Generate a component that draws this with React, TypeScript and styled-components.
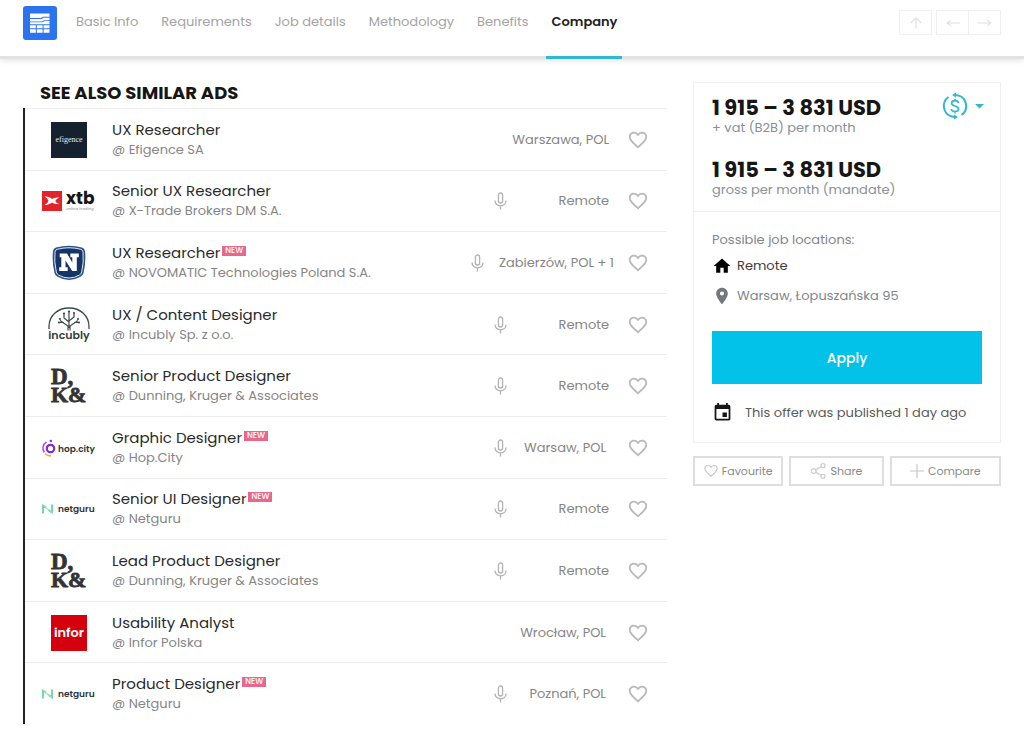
import React from "react";
import styled, { createGlobalStyle } from "styled-components";

const Global = createGlobalStyle`
  * { box-sizing: border-box; }
  body {
    margin: 0;
    background: #fff;
    color: #222;
    font-family: Poppins, Inter, "Noto Sans", sans-serif;
    font-size: 13px;
    line-height: 20px;
  }
  h2, p, ul { margin: 0; padding: 0; }
  ul { list-style: none; }
  a { color: inherit; text-decoration: none; }
  button { font: inherit; cursor: pointer; padding: 0; background: none; border: 0; }
  svg { display: block; flex: none; overflow: visible; }
`;

const Header = styled.header`
  display: flex;
  align-items: flex-start;
  height: 59px;
  padding: 0 23px;
  border-bottom: 3px solid #e2e2e2;
  box-shadow: 0 2px 5px rgba(0, 0, 0, 0.1);
`;

const BrandLink = styled.a`
  margin: 6px 14px 0 0;
`;

const Tabs = styled.nav`
  display: flex;
  flex: 1;
  gap: 13px;
`;

const Tab = styled.a<{ $active?: boolean }>`
  height: 59px;
  padding: 12px 5px 0;
  color: ${(p) => (p.$active ? "#222" : "#a3a3a3")};
  font-weight: ${(p) => (p.$active ? 600 : 400)};
  border-bottom: 3px solid ${(p) => (p.$active ? "#2fb9d0" : "transparent")};
`;

const Pager = styled.div`
  display: flex;
  margin-top: 10px;
`;

const PagerButton = styled.button<{ $joined?: boolean; $apart?: boolean }>`
  display: grid;
  place-items: center;
  width: 33px;
  height: 25px;
  border: 1px solid #efefef;
  color: #e0e0e0;
  margin-right: ${(p) => (p.$apart ? "4px" : "0")};
  margin-left: ${(p) => (p.$joined ? "-1px" : "0")};
`;

const Page = styled.div`
  display: grid;
  grid-template-columns: minmax(0, 1fr) 308px;
  gap: 26px;
  align-items: start;
  padding: 23px 23px 11px;
`;

const Heading = styled.h2`
  padding: 0 0 4px 17px;
  font-size: 18px;
  line-height: 22px;
  font-weight: 700;
  color: #161616;
`;

const AdList = styled.ul`
  display: grid;
  grid-auto-rows: 1fr;
  min-height: 616px;
  border-left: 2px solid #222;
`;

const AdRow = styled.li`
  display: flex;
  align-items: center;
  padding: 1px 18px 0 16px;
  border-top: 1px solid #ededed;
`;

const LogoCell = styled.div`
  display: grid;
  place-items: center;
  width: 56px;
  margin-right: 15px;
`;

const AdText = styled.div`
  flex: 1;
  min-width: 0;
`;

const AdTitle = styled.a`
  display: flex;
  align-items: center;
  gap: 2px;
  font-size: 15px;
  color: #2a2a2a;
`;

const NewBadge = styled.span`
  padding: 0 3px;
  margin-bottom: 4px;
  background: #e9668c;
  color: #fff;
  font-size: 8px;
  line-height: 10px;
  font-weight: 500;
`;

const Company = styled.p`
  color: #858585;
`;

const Place = styled.span<{ $inset: number }>`
  min-width: 107px;
  padding: 0 ${(p) => p.$inset}px 0 15px;
  text-align: right;
  color: #858585;
`;

const HeartButton = styled.button`
  margin-left: 13px;
  color: #b9b9b9;
`;

const Card = styled.section`
  border: 1px solid #efefef;
`;

const Salaries = styled.div`
  display: flex;
  justify-content: space-between;
  padding: 12px 16px 14px 18px;
  border-bottom: 1px solid #efefef;
`;

const Salary = styled.div`
  & + & { margin-top: 22px; }
`;

const Amount = styled.p`
  font-size: 21px;
  line-height: 26px;
  font-weight: 700;
  color: #161616;
`;

const SalaryNote = styled.p`
  line-height: 14px;
  color: #8a9096;
`;

const CurrencyButton = styled.button`
  display: flex;
  align-items: center;
  gap: 7px;
  height: 22px;
  color: #2fb9d0;
`;

const Details = styled.div`
  padding: 18px;
`;

const Muted = styled.p`
  color: #80868c;
`;

const LocationRow = styled.p<{ $strong?: boolean }>`
  display: flex;
  align-items: center;
  gap: 5px;
  height: 20px;
  margin-top: ${(p) => (p.$strong ? "6px" : "10px")};
  color: ${(p) => (p.$strong ? "#3c3c3c" : "#80868c")};
`;

const ApplyButton = styled.button`
  width: 100%;
  height: 53px;
  margin-top: 25px;
  background: #03c2ea;
  color: #fff;
  font-size: 14px;
  font-weight: 500;
`;

const Published = styled.p`
  display: flex;
  align-items: center;
  gap: 12px;
  margin: 18px 0 1px;
  color: #5a5a5a;
`;

const Actions = styled.div`
  display: grid;
  grid-template-columns: 90fr 94fr 111fr;
  gap: 6px;
  margin-top: 13px;
`;

const ActionButton = styled.button`
  display: flex;
  align-items: center;
  justify-content: center;
  gap: 4px;
  height: 30px;
  border: 2px solid #dedede;
  color: #8a8a8a;
  font-size: 11px;
`;

const Icon = ({ children, size = 24, stroke = 2 }: { children: React.ReactNode; size?: number; stroke?: number }) => (
  <svg width={size} height={size} viewBox="0 0 24 24" fill="none" stroke="currentColor" strokeWidth={stroke} aria-hidden="true">
    {children}
  </svg>
);

const Heart = ({ size = 22 }: { size?: number }) => (
  <svg width={size} height={size} viewBox="0 0 24 24" fill="currentColor" aria-hidden="true">
    <path d="M16.5 3c-1.74 0-3.41.81-4.5 2.09C10.91 3.81 9.24 3 7.5 3 4.42 3 2 5.42 2 8.5c0 3.78 3.4 6.86 8.55 11.54L12 21.35l1.45-1.32C18.6 15.36 22 12.28 22 8.5 22 5.42 19.58 3 16.5 3zm-4.4 15.55l-.1.1-.1-.1C7.14 14.24 4 11.39 4 8.5 4 6.5 5.5 5 7.5 5c1.54 0 3.04.99 3.57 2.36h1.87C13.46 5.99 14.96 5 16.5 5c2 0 3.5 1.5 3.5 3.5 0 2.89-3.14 5.74-7.9 10.05z" />
  </svg>
);

const Mic = () => (
  <svg width="13" height="18" viewBox="0 0 13 18" fill="none" stroke="#b3b3b3" strokeWidth="1.3" aria-label="Remote recruitment" role="img">
    <rect x="4.4" y="1" width="4.2" height="10" rx="2.1" />
    <path d="M1 8.5c0 3 2.2 5.3 5.5 5.3S12 11.5 12 8.5M6.5 13.8V17.5" />
  </svg>
);

const BrandMark = () => (
  <svg width="34" height="34" viewBox="0 0 34 34" role="img" aria-label="Home">
    <rect width="34" height="34" rx="3" fill="#2c74ef" />
    <path fill="#fff" d="M7 7.500h19.500v3.300h-6.500l-2 1.200H7zM7 12.900h11.500l2-1.200h6v2.600h-5.500l-2.200 1.200H7zM7 16.300h12.500l2.200-1.200h4.800v3.200H7zM7 19.200h5.800v3.100H7zM13.800 19.200h5.800v3.100h-5.800zM20.600 19.200h5.900v3.100h-5.900zM7 23.200h5.800v3.500H7zM13.800 23.200h5.800v3.500h-5.800zM20.600 23.200h5.900v3.500h-5.900z" />
  </svg>
);

const Efigence = () => (
  <svg width="36" height="36" viewBox="0 0 36 36">
    <rect width="36" height="36" fill="#162130" />
    <text x="18" y="20" fill="#e8eaec" fontFamily="Liberation Serif, serif" fontSize="8" textAnchor="middle">efigence</text>
  </svg>
);

const Xtb = () => (
  <svg width="54" height="22" viewBox="0 0 54 22">
    <rect y="1" width="20" height="20" fill="#e1242a" />
    <path d="M2.500 6.500c3.500-.3 5.800 1 7.700 2.500 2-1.200 4.400-1.700 7.300-1.500-2 .9-3.500 2-4.200 3.500.8 1.500 2.300 2.500 4.300 3-3 .4-5.600-.2-7.500-1.500-2.200 1.500-4.600 2.600-7.600 2.600 1.900-1.100 3.300-2.400 4-4.100-.5-1.700-1.900-3.300-4-4.500z" fill="#fff" />
    <text x="24" y="14" fill="#161616" fontFamily="Poppins, sans-serif" fontSize="17" fontWeight="700">xtb</text>
    <text x="24" y="20" fill="#8a8a8a" fontFamily="Poppins, sans-serif" fontSize="4">online trading</text>
  </svg>
);

const Novomatic = () => (
  <svg width="34" height="36" viewBox="0 0 34 36">
    <path d="M4 2.500Q17-1 30 2.500q2.500.7 3 3.500 1.200 11-1.500 22-.7 2.600-3 3.800-5.500 3.200-11.500 3.200T5.500 31.800q-2.300-1.200-3-3.800Q-.2 17 1 6q.5-2.800 3-3.500z" fill="#2d5288" />
    <path d="M5.200 4.300Q17 1.200 28.800 4.300q1.900.5 2.200 2.600 1 10.200-1.300 20-.5 2.200-2.300 3.200Q22.500 33 17 33T6.600 30.100q-1.800-1-2.300-3.200Q2 17 3 6.900q.3-2.100 2.200-2.600z" fill="#153566" stroke="#dfe6ef" strokeWidth="1" />
    <path d="M7.700 8.500h7.300l5.300 9v-5.300h-2V8.500h8.500v3.700h-2V26h-4.600l-6.700-10.500v6.800h2.200V26H7.200v-3.700h2.100V12.200H7.700z" fill="#fff" />
  </svg>
);

const Incubly = () => (
  <svg width="42" height="36" viewBox="0 0 42 36" fill="none" stroke="#3d4a48" strokeWidth="1.3">
    <path d="M1 22V19.500C1 9 9.500 1 21 1s20 8 20 18.500V22" />
    <path d="M20 23.500v-4.500l-8-5.500M22 23.500v-4.500l8-5.500M21 21V5M21 15l-5-4V7M21 14l5-4V6.500M16 15.500h-5M26 15.500h5" strokeWidth="1.200" />
    <g fill="#3d4a48" stroke="none">
      <circle cx="21" cy="4.500" r="1.100" /><circle cx="16" cy="6.500" r="1.100" /><circle cx="26" cy="6" r="1.100" />
      <circle cx="12" cy="12" r="1.100" /><circle cx="30" cy="12" r="1.100" /><circle cx="11" cy="15.500" r="1.100" />
      <circle cx="31" cy="15.500" r="1.100" />
    </g>
    <text x="21" y="32" fill="#33403e" stroke="none" fontFamily="Poppins, sans-serif" fontSize="11" fontWeight="600" textAnchor="middle">incubly</text>
  </svg>
);

const DunningKruger = () => (
  <svg width="36" height="36" viewBox="0 0 36 36" fill="#333" stroke="#333" strokeWidth=".8" fontFamily="Liberation Serif, serif" fontWeight="700">
    <text x="0" y="16" fontSize="23">D,</text>
    <text x="0" y="34" fontSize="22">K&amp;</text>
  </svg>
);

const HopCity = () => (
  <svg width="54" height="20" viewBox="0 0 54 20" fill="none">
    <circle cx="8.500" cy="10.500" r="3.700" stroke="#7d2ae0" strokeWidth="2.200" />
    <circle cx="8.800" cy="3" r="1.200" fill="#7d2ae0" />
    <path d="M4.500 3.800A7.500 7.500 0 0 0 2.300 14.500" stroke="#b049e0" strokeWidth="1.500" />
    <path d="M3 15.500q2.500 2.700 6 2.200" stroke="#f2b34a" strokeWidth="1.700" />
    <text x="16" y="14" fill="#333" fontFamily="Poppins, sans-serif" fontSize="9" fontWeight="600">hop.city</text>
  </svg>
);

const Netguru = () => (
  <svg width="54" height="16" viewBox="0 0 54 16">
    <path d="M1 12.500V4.500l3 2M10 3.500v8l-3.500-2.500" fill="none" stroke="#57cf92" strokeWidth="1.600" />
    <path d="M1 4.500l9 7" stroke="#9be3c0" strokeWidth="1.200" />
    <text x="16" y="11" fill="#333" fontFamily="Poppins, sans-serif" fontSize="9" fontWeight="600">netguru</text>
  </svg>
);

const Infor = () => (
  <svg width="36" height="36" viewBox="0 0 36 36">
    <rect width="36" height="36" fill="#d5000e" />
    <text x="18" y="22" fill="#fff" fontFamily="Poppins, sans-serif" fontSize="13" fontWeight="600" textAnchor="middle">infor</text>
  </svg>
);

type Ad = { title: string; company: string; place: string; logo: React.FC; fresh?: boolean; mic?: boolean; inset?: number };

const ads: Ad[] = [
  { title: "UX Researcher", company: "Efigence SA", place: "Warszawa, POL", logo: Efigence },
  { title: "Senior UX Researcher", company: "X-Trade Brokers DM S.A.", place: "Remote", logo: Xtb, mic: true },
  { title: "UX Researcher", company: "NOVOMATIC Technologies Poland S.A.", place: "Zabierzów, POL + 1", logo: Novomatic, fresh: true, mic: true, inset: 0 },
  { title: "UX / Content Designer", company: "Incubly Sp. z o.o.", place: "Remote", logo: Incubly, mic: true },
  { title: "Senior Product Designer", company: "Dunning, Kruger & Associates", place: "Remote", logo: DunningKruger, mic: true },
  { title: "Graphic Designer", company: "Hop.City", place: "Warsaw, POL", logo: HopCity, fresh: true, mic: true, inset: 8 },
  { title: "Senior UI Designer", company: "Netguru", place: "Remote", logo: Netguru, fresh: true, mic: true },
  { title: "Lead Product Designer", company: "Dunning, Kruger & Associates", place: "Remote", logo: DunningKruger, mic: true },
  { title: "Usability Analyst", company: "Infor Polska", place: "Wrocław, POL", logo: Infor, inset: 8 },
  { title: "Product Designer", company: "Netguru", place: "Poznań, POL", logo: Netguru, fresh: true, mic: true, inset: 8 },
];

const tabs = ["Basic Info", "Requirements", "Job details", "Methodology", "Benefits", "Company"];

export default function App() {
  return (
    <>
      <Global />
      <Header>
        <BrandLink href="#"><BrandMark /></BrandLink>
        <Tabs>
          {tabs.map((tab) => (
            <Tab key={tab} href="#" $active={tab === "Company"}>{tab}</Tab>
          ))}
        </Tabs>
        <Pager>
          <PagerButton $apart aria-label="Up"><Icon size={14}><path d="M12 22V3M3 12l9-9 9 9" /></Icon></PagerButton>
          <PagerButton aria-label="Previous"><Icon size={14}><path d="M24 12H2M8 7l-6 5 6 5" /></Icon></PagerButton>
          <PagerButton $joined aria-label="Next"><Icon size={14}><path d="M0 12h22M16 7l6 5-6 5" /></Icon></PagerButton>
        </Pager>
      </Header>
      <Page>
        <main>
          <Heading>SEE ALSO SIMILAR ADS</Heading>
          <AdList>
            {ads.map((ad, i) => (
              <AdRow key={i}>
                <LogoCell><ad.logo /></LogoCell>
                <AdText>
                  <AdTitle href="#">{ad.title}{ad.fresh && <NewBadge>NEW</NewBadge>}</AdTitle>
                  <Company>@ {ad.company}</Company>
                </AdText>
                {ad.mic && <Mic />}
                <Place $inset={ad.inset ?? 5}>{ad.place}</Place>
                <HeartButton aria-label="Add to favourites"><Heart /></HeartButton>
              </AdRow>
            ))}
          </AdList>
        </main>
        <aside>
          <Card>
            <Salaries>
              <div>
                <Salary>
                  <Amount>1 915 – 3 831 USD</Amount>
                  <SalaryNote>+ vat (B2B) per month</SalaryNote>
                </Salary>
                <Salary>
                  <Amount>1 915 – 3 831 USD</Amount>
                  <SalaryNote>gross per month (mandate)</SalaryNote>
                </Salary>
              </div>
              <CurrencyButton aria-label="Change currency">
                <svg width="26" height="26" viewBox="0 0 26 26" fill="none" stroke="currentColor" strokeWidth="2">
                  <path d="M6.500 4A11 11 0 0 0 10 23.600l3 .4M19.500 22A11 11 0 0 0 16 2.400L13 2" />
                  <path d="M14 -.5v5l-4-2.500zM12 21.500v5l4-2.500z" fill="currentColor" stroke="none" />
                  <path d="M16.500 10c-.3-1.500-1.600-2.300-3.500-2.300s-3.400.9-3.400 2.500c0 3.600 7 1.900 7 5.600 0 1.700-1.500 2.700-3.600 2.700s-3.500-.9-3.700-2.500M13 6v2M13 18.400v2" strokeWidth="1.700" />
                </svg>
                <svg width="9" height="5" viewBox="0 0 9 5"><path d="M0 0h9L4.500 4.500z" fill="currentColor" /></svg>
              </CurrencyButton>
            </Salaries>
            <Details>
              <Muted>Possible job locations:</Muted>
              <LocationRow $strong>
                <svg width="20" height="20" viewBox="0 0 24 24" fill="#000"><path d="M10 20v-6h4v6h5v-8h3L12 3 2 12h3v8z" /></svg>
                Remote
              </LocationRow>
              <LocationRow>
                <svg width="20" height="20" viewBox="0 0 24 24" fill="#74787c"><path d="M12 2C8.130 2 5 5.130 5 9c0 5.250 7 13 7 13s7-7.750 7-13c0-3.870-3.130-7-7-7zm0 9.500a2.500 2.500 0 0 1 0-5 2.500 2.500 0 0 1 0 5z" /></svg>
                Warsaw, Łopuszańska 95
              </LocationRow>
              <ApplyButton>Apply</ApplyButton>
              <Published>
                <svg width="21" height="21" viewBox="0 0 24 24" fill="#161616"><path d="M17 12h-5v5h5v-5zM16 1v2H8V1H6v2H5c-1.110 0-1.990.9-1.990 2L3 19c0 1.100.890 2 2 2h14c1.100 0 2-.9 2-2V5c0-1.100-.9-2-2-2h-1V1h-2zm3 18H5V8h14v11z" /></svg>
                This offer was published 1 day ago
              </Published>
            </Details>
          </Card>
          <Actions>
            <ActionButton><Icon size={14} stroke={2}><path d="M12 21C5 15 1.500 12 1.500 7.800 1.500 4.500 4 2.500 6.800 2.500 9 2.500 11 3.700 12 5.600c1-1.900 3-3.100 5.200-3.100 2.800 0 5.300 2 5.300 5.300C22.500 12 19 15 12 21z" stroke="#c6c6c6" /></Icon>Favourite</ActionButton>
            <ActionButton><Icon size={16} stroke={2}><g stroke="#d0d0d0"><circle cx="4" cy="12" r="3.500" /><circle cx="18" cy="4" r="3" /><circle cx="18" cy="20" r="3" /><path d="M7.200 10.300l8.200-4.800M7.200 13.700l8.200 4.800" /></g></Icon>Share</ActionButton>
            <ActionButton><Icon size={14} stroke={2}><path d="M12 0v24M0 12h24" stroke="#c6c6c6" /></Icon>Compare</ActionButton>
          </Actions>
        </aside>
      </Page>
    </>
  );
}
